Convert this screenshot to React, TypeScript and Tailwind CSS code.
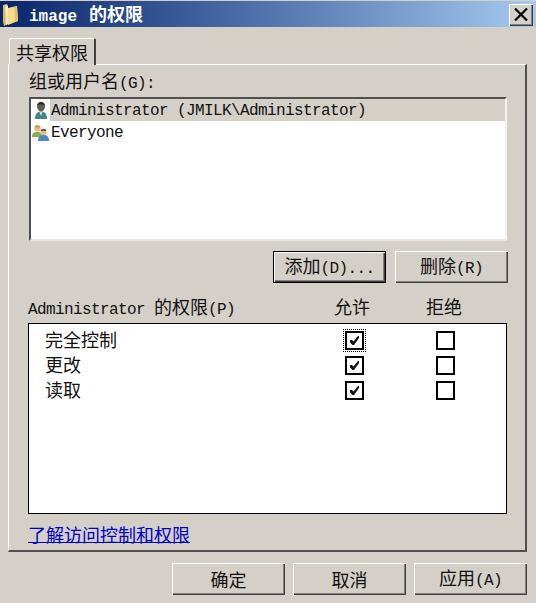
const mono = "font-['Liberation_Mono','Noto_Sans_CJK_SC',monospace]";
const latin = "text-[16px] tracking-[-0.6px] leading-[20px] font-['Liberation_Mono',monospace]";

function T({ cn, lat, pre }: { cn?: string; lat?: string; pre?: string }) {
  return (
    <span className="inline-flex items-baseline whitespace-pre">
      {pre && <span className={latin}>{pre}</span>}
      {cn && <span className="text-[18px] leading-[20px] font-['Noto_Sans_CJK_SC',sans-serif]">{cn}</span>}
      {lat && <span className={latin}>{lat}</span>}
    </span>
  );
}

const raised = "shadow-[inset_1px_1px_0_#fff,inset_-1px_-1px_0_#404040,inset_-2px_-2px_0_#808080]";

function Btn({ cn, lat, def }: { cn: string; lat?: string; def?: boolean }) {
  return (
    <div className={`w-[113px] h-[32px] flex items-center justify-center text-[#111] bg-[#d4d0c8] ${raised} ${def ? "border border-black" : ""}`}>
      <T cn={cn} lat={lat} />
    </div>
  );
}

function Check({ on, focus }: { on?: boolean; focus?: boolean }) {
  return (
    <div className={`w-[23px] h-[23px] flex items-center justify-center ${focus ? "outline-1 outline-dotted outline-black -outline-offset-1" : ""}`}>
      <div className="w-[19px] h-[19px] border-2 border-black bg-white flex items-center justify-center">
        {on && (
          <svg width="9" height="9" viewBox="0 0 9 9">
            <path d="M0 4 L2 4 L3.5 5.5 L8 0 L9 0 L9 2 L4 9 L2.5 9 L0 6.5Z" fill="#111" />
          </svg>
        )}
      </div>
    </div>
  );
}

function PermRow({ label, focus, on }: { label: string; focus?: boolean; on?: boolean }) {
  return (
    <div className="h-[25px] flex items-center">
      <div className="w-[314px] pl-[16px] pt-[2px] text-[#111]">
        <T cn={label} />
      </div>
      <Check on={on} focus={focus} />
      <div className="w-[68px]" />
      <Check />
    </div>
  );
}

function Folder() {
  return (
    <svg width="16" height="24" viewBox="0 0 16 24">
      <path d="M1 3 L5 2 L6 4 L6 22 L2 24 L1 20Z" fill="#d9b95a" />
      <path d="M6 6 L15 4 L16 19 L6 23Z" fill="#f3dc92" />
      <path d="M3 3 L6 4 L6 22 L4 23Z" fill="#f8eab8" />
      <path d="M12 5 L15 4 L16 19 L13 20Z" fill="#e3c266" />
    </svg>
  );
}

function UserIcon() {
  return (
    <svg width="14" height="19" viewBox="0 0 14 19">
      <path d="M1 18 C1 12 4 10.5 7 10.5 C10 10.5 13 12 13 18Z" fill="#3f8a80" />
      <path d="M5.5 11 L7 15 L8.5 11Z" fill="#cfe4e0" />
      <ellipse cx="7" cy="5.5" rx="4" ry="4.8" fill="#6b5a52" />
      <path d="M3 5 C3 0 11 0 11 5 L9.5 3.5 L5 3.5Z" fill="#2f2a28" />
    </svg>
  );
}

function GroupIcon() {
  return (
    <svg width="17" height="17" viewBox="0 0 17 17">
      <circle cx="5.5" cy="4.5" r="3.2" fill="#e8b98c" />
      <path d="M2.5 3.5 C3.5 0 7.5 0 8.5 3.5Z" fill="#c09a48" />
      <path d="M0 13 C0 8 3 8 5.5 8 C8 8 10 9 10 13Z" fill="#7fb24a" />
      <circle cx="11.5" cy="8" r="3" fill="#e5b58c" />
      <path d="M8.5 7 C9.5 4 13.5 4 14.5 7Z" fill="#6b5636" />
      <path d="M6 17 C6 12 8.5 11 11.5 11 C14.5 11 17 12 17 17Z" fill="#4f86c6" />
    </svg>
  );
}

export default function App() {
  return (
    <div className={`w-[536px] h-[603px] bg-[#d4d0c8] overflow-hidden flex flex-col ${mono}`}>
      <div className="mt-px h-[26px] bg-gradient-to-r from-[#0a246a] to-[#a6caef] flex items-center shrink-0">
        <div className="w-[29px] pl-[2px] flex items-center"><Folder /></div>
        <div className="flex items-baseline text-white pt-[1px]">
          <span className="text-[16px] leading-[20px] font-bold font-['Liberation_Mono',monospace]">image</span>
          <span className="w-[12px]" />
          <span className="text-[18px] leading-[20px] font-bold font-['Noto_Sans_CJK_SC',sans-serif]">的权限</span>
        </div>
        <div className={`ml-auto mr-[3px] w-[24px] h-[22px] mt-[1px] bg-[#d4d0c8] flex items-center justify-center ${raised}`}>
          <svg width="14" height="13" viewBox="0 0 14 13">
            <path d="M1 0.5 L13 12.5 M13 0.5 L1 12.5" stroke="#000" strokeWidth="2.2" />
          </svg>
        </div>
      </div>

      <div className="pl-[9px] pt-[11px] shrink-0">
        <div className="w-[87px] h-[27px] -mb-px relative z-10 flex items-center justify-center bg-[#d4d0c8] border-t border-l border-white rounded-t-[2px] border-r-2 border-r-[#404040] text-[#111]">
          <T cn="共享权限" />
        </div>
      </div>

      <div className="ml-[8px] w-[519px] h-[488px] shrink-0 pl-[19px] flex flex-col border-t border-l border-white border-r-2 border-b-2 border-r-[#505050] border-b-[#505050]">
        <div className="h-[32px] shrink-0 pl-[1px] pt-[2px] flex items-center text-[#111]">
          <T cn="组或用户名" lat="(G):" />
        </div>
        <div className="w-[478px] h-[144px] ml-[1px] bg-white border-2 border-t-[#505050] border-l-[#505050] border-b-[#e8e6e0] border-r-[#f4f3ef] shrink-0">
          <div className="flex items-center h-[22px] text-[#111]">
            <div className="w-[19px] h-full flex items-center justify-center bg-white"><UserIcon /></div>
            <div className="flex-1 h-full bg-[#d4d0c8] flex items-center pl-[1px] pt-[1px]"><T lat="Administrator (JMILK\Administrator)" /></div>
          </div>
          <div className="flex items-center h-[22px] text-[#111]">
            <div className="w-[19px] h-full flex items-center justify-center"><GroupIcon /></div>
            <div className="pl-[1px] pt-[1px]"><T lat="Everyone" /></div>
          </div>
        </div>
        <div className="flex justify-end gap-[9px] mt-[10px] w-[480px] shrink-0">
          <Btn cn="添加" lat="(D)..." def />
          <Btn cn="删除" lat="(R)" />
        </div>
        <div className="h-[40px] flex items-center pt-[12px] text-[#111] shrink-0">
          <div className="w-[306px]"><T pre="Administrator " cn="的权限" lat="(P)" /></div>
          <div className="w-[92px]"><T cn="允许" /></div>
          <div><T cn="拒绝" /></div>
        </div>
        <div className="w-[479px] h-[191px] bg-white border border-black pt-[4px] shrink-0">
          <PermRow label="完全控制" focus on />
          <PermRow label="更改" on />
          <PermRow label="读取" on />
        </div>
        <div className="h-[36px] shrink-0 pt-[10px]">
          <a className="inline-block h-[19px] text-[#0000c8] border-b border-[#0000c8] leading-[18px]"><T cn="了解访问控制和权限" /></a>
        </div>
      </div>

      <div className="flex justify-end gap-[8px] pr-[9px] mt-[11px] shrink-0">
        <Btn cn="确定" />
        <Btn cn="取消" />
        <Btn cn="应用" lat="(A)" />
      </div>
    </div>
  );
}
